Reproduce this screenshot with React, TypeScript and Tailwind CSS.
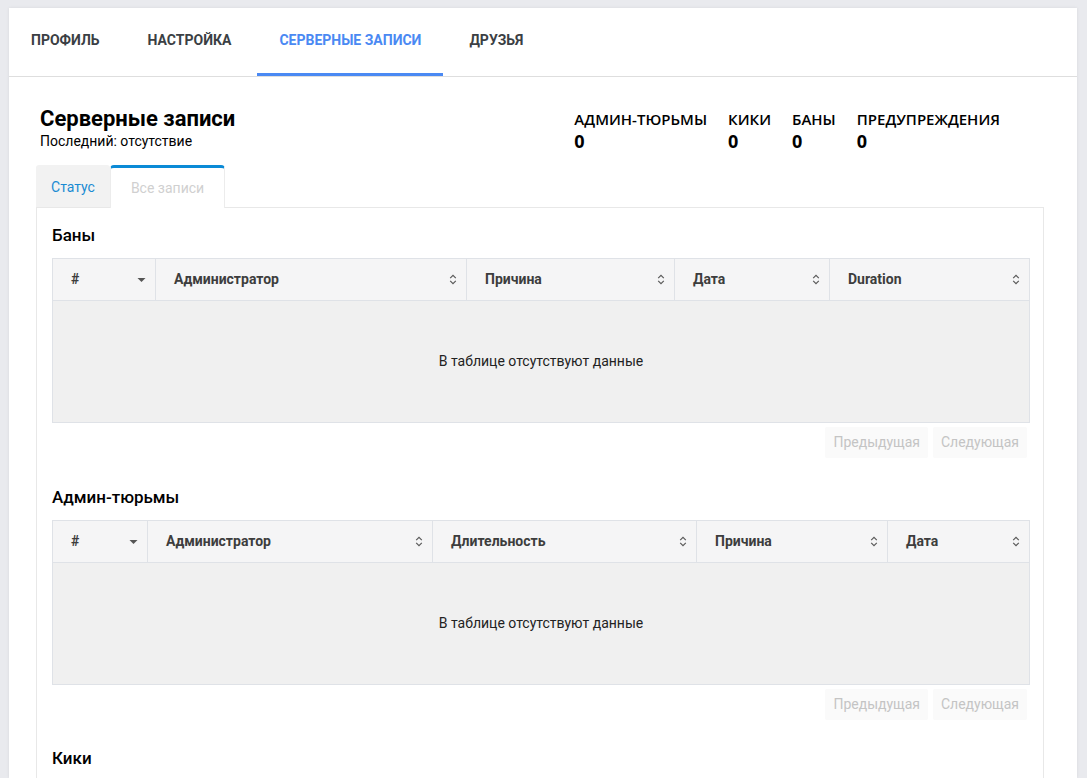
import React from "react";

const SortBoth = () => (
  <svg width="8" height="11" viewBox="0 0 8 11" className="shrink-0">
    <path d="M1.2 4.2 L4 1.4 L6.8 4.2" fill="none" stroke="#5a5a5a" strokeWidth="1.2" />
    <path d="M1.2 6.8 L4 9.6 L6.8 6.8" fill="none" stroke="#5a5a5a" strokeWidth="1.2" />
  </svg>
);

const SortDesc = () => (
  <svg width="9" height="6" viewBox="0 0 9 6" className="shrink-0">
    <path d="M0.5 1 L8.5 1 L4.5 5 Z" fill="#555" />
  </svg>
);

type Col = { label: string; w: string; first?: boolean };

const DataTable = ({ cols }: { cols: Col[] }) => (
  <div>
    <table className="w-full border-collapse table-fixed">
      <colgroup>
        {cols.map((c, i) => (
          <col key={i} style={{ width: c.w }} />
        ))}
      </colgroup>
      <thead>
        <tr className="bg-[#f5f5f6]">
          {cols.map((c, i) => (
            <th
              key={i}
              className="h-[42px] border border-[#dfe2e7] pl-[18px] pr-[9px] text-left text-[14px] font-bold text-[#3d3d3d]"
            >
              <div className="flex items-center justify-between">
                <span>{c.label}</span>
                {c.first ? <SortDesc /> : <SortBoth />}
              </div>
            </th>
          ))}
        </tr>
      </thead>
      <tbody>
        <tr>
          <td
            colSpan={cols.length}
            className="h-[122px] border border-[#dfe2e7] bg-[#f0f0f0] text-center text-[14px] text-[#222]"
          >
            В таблице отсутствуют данные
          </td>
        </tr>
      </tbody>
    </table>
    <div className="mt-[4px] flex justify-end gap-[5px] pr-px">
      <button className="h-[31px] rounded-[2px] bg-[#fafafa] px-[8px] text-[14px] text-[#c4c4c4]">
        Предыдущая
      </button>
      <button className="h-[31px] rounded-[2px] bg-[#fafafa] px-[8px] text-[14px] text-[#c4c4c4]">
        Следующая
      </button>
    </div>
  </div>
);

export default function App() {
  const navTabs = ["ПРОФИЛЬ", "НАСТРОЙКА", "СЕРВЕРНЫЕ ЗАПИСИ", "ДРУЗЬЯ"];
  const stats = [
    { l: "АДМИН-ТЮРЬМЫ", v: "0" },
    { l: "КИКИ", v: "0" },
    { l: "БАНЫ", v: "0" },
    { l: "ПРЕДУПРЕЖДЕНИЯ", v: "0" },
  ];
  return (
    <div
      className="h-[778px] overflow-hidden bg-[#e9eaee] pl-[9px] pr-[10px] pt-[8px]"
      style={{ fontFamily: "Roboto, 'Noto Sans', sans-serif" }}
    >
      <div className="h-full bg-white shadow-[0_0_3px_rgba(0,0,0,0.08)]">
        {/* top nav */}
        <div className="flex h-[69px] items-stretch gap-[4px] border-b border-[#dedede]">
          {navTabs.map((t, i) => (
            <div
              key={t}
              className={
                i === 2
                  ? "flex items-center border-b-[3px] border-[#4a89f3] px-[22px] text-[14px] font-bold text-[#4a89f3]"
                  : "flex items-center border-b-[3px] border-transparent px-[22px] text-[14px] font-bold text-[#3b3f44]"
              }
            >
              {t}
            </div>
          ))}
        </div>

        <div className="pl-[27px] pr-[33px]">
          {/* header */}
          <div className="flex items-start justify-between pl-[4px] pr-[44px] pt-[28px]">
            <div>
              <div className="text-[22px] font-bold leading-[27px] text-black">Серверные записи</div>
              <div className="text-[14px] leading-[18px] text-black">Последний: отсутствие</div>
            </div>
            <div
              className="flex gap-[21px] pt-[4px]"
              style={{ fontFamily: "'Open Sans', 'Noto Sans', sans-serif" }}
            >
              {stats.map((s) => (
                <div key={s.l}>
                  <div className="text-[15px] font-semibold leading-[20px] text-black">{s.l}</div>
                  <div className="text-[18px] font-bold leading-[24px] text-black">{s.v}</div>
                </div>
              ))}
            </div>
          </div>

          {/* inner tabs */}
          <div className="mt-[12px] flex h-[42px] items-stretch">
            <div className="flex w-[74px] items-center justify-center rounded-t-[3px] bg-[#f2f2f2] pt-[3px] text-[14px] text-[#1a8bd2]">
              Статус
            </div>
            <div className="relative z-10 -mb-px flex w-[115px] items-center justify-center rounded-t-[4px] border-x border-t-[3px] border-x-[#ececec] border-t-[#0b8ad6] bg-white pt-[1px] text-[14px] text-[#d0d0d0]">
              Все записи
            </div>
          </div>

          {/* panel */}
          <div className="border border-[#e8e8e8] px-[15px] pt-[17px] pb-[20px]">
            <div className="text-[17px] font-medium leading-[20px] text-black">Баны</div>
            <div className="mt-[13px]">
              <DataTable
                cols={[
                  { label: "#", w: "103px", first: true },
                  { label: "Администратор", w: "311px" },
                  { label: "Причина", w: "208px" },
                  { label: "Дата", w: "155px" },
                  { label: "Duration", w: "200px" },
                ]}
              />
            </div>

            <div className="mt-[29px] text-[17px] font-medium leading-[20px] text-black">Админ-тюрьмы</div>
            <div className="mt-[13px]">
              <DataTable
                cols={[
                  { label: "#", w: "95px", first: true },
                  { label: "Администратор", w: "285px" },
                  { label: "Длительность", w: "264px" },
                  { label: "Причина", w: "191px" },
                  { label: "Дата", w: "142px" },
                ]}
              />
            </div>

            <div className="mt-[28px] text-[17px] font-medium leading-[20px] text-black">Кики</div>
          </div>
        </div>
      </div>
    </div>
  );
}
